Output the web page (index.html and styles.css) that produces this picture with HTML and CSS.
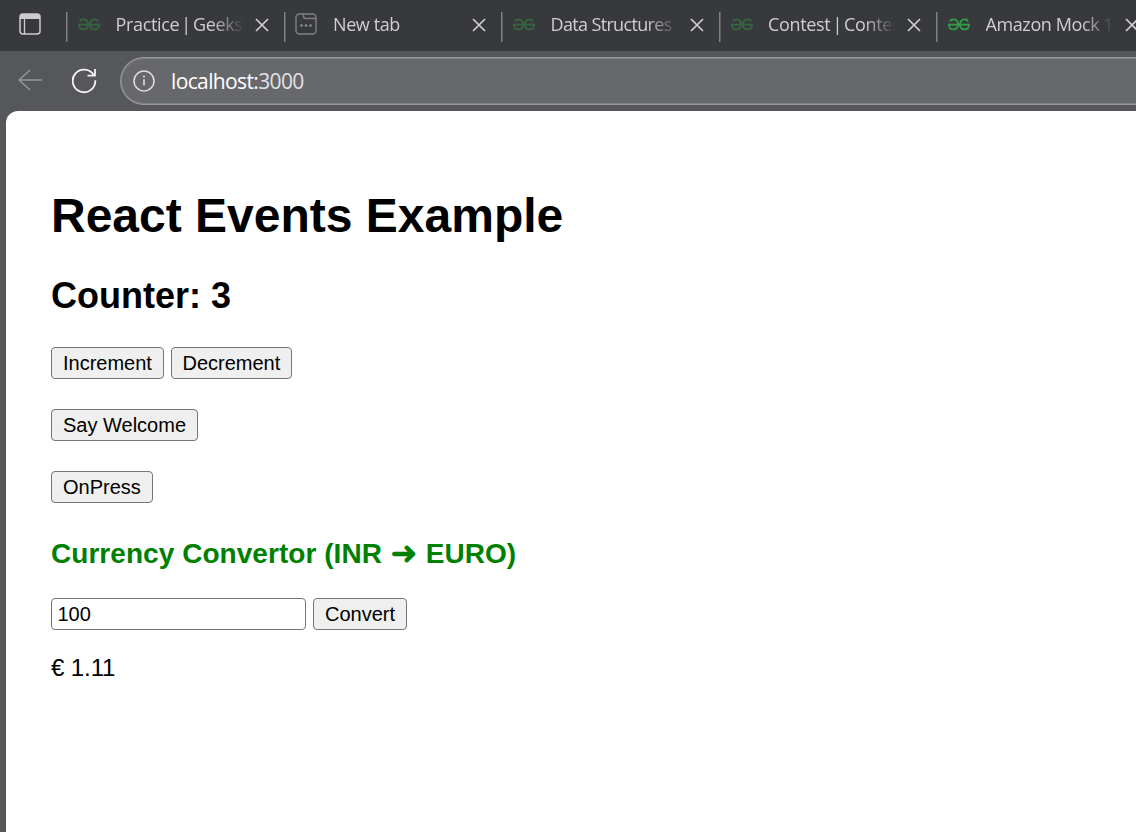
FILE: index.html
```html
<!DOCTYPE html>
<html lang="en">
<head>
<meta charset="utf-8">
<title>React Events Example</title>
<link rel="stylesheet" href="styles.css">
</head>
<body>
<svg class="defs" aria-hidden="true">
  <symbol id="gfg" viewBox="0 0 22 14">
    <g fill="none" stroke="currentColor" stroke-width="1.8">
      <path d="M0 6.6H22"/>
      <path d="M1.8 3.4C2.6 1.9 3.9 1.4 5.4 1.4C8.2 1.4 10 3.4 10 6.4C10 9.4 8.2 11.3 5.4 11.3C2.8 11.3 1 9.6 1 6.9"/>
      <path d="M20.2 3.4C19.4 1.9 18.1 1.4 16.6 1.4C13.8 1.4 12 3.4 12 6.4C12 9.4 13.8 11.3 16.6 11.3C19.2 11.3 21 9.6 21 6.9"/>
    </g>
  </symbol>
  <symbol id="close" viewBox="0 0 14 14"><path d="M1 1L13 13M13 1L1 13" fill="none" stroke="currentColor" stroke-width="1.7"/></symbol>
</svg>
<header class="tabs">
  <div class="workspace">
    <svg width="22" height="22" viewBox="0 0 22 22"><rect x="1" y="1" width="20" height="20" rx="3" fill="none" stroke="#ccc" stroke-width="1.5"/><path d="M1 6V4Q1 1 4 1H18Q21 1 21 4V6Z" fill="#ccc"/><path d="M5.5 6V21" stroke="#ccc" stroke-width="1.3"/></svg>
  </div>
  <div class="tab"><svg class="logo"><use href="#gfg"/></svg><span class="label piped">Practice | Geeksf</span><svg class="close"><use href="#close"/></svg></div>
  <div class="tab"><svg class="blank" viewBox="0 0 22 22"><g fill="none" stroke="#808184" stroke-width="1.4"><rect x="1" y="1" width="20" height="20" rx="3.5"/><path d="M8.5 1V3Q8.5 5.5 11 5.5H21"/></g><g fill="#909194"><circle cx="6.5" cy="12.5" r="1.3"/><circle cx="11" cy="12.5" r="1.3"/><circle cx="15.5" cy="12.5" r="1.3"/></g></svg><span class="label">New tab</span><svg class="close"><use href="#close"/></svg></div>
  <div class="tab"><svg class="logo"><use href="#gfg"/></svg><span class="label long">Data Structures</span><svg class="close"><use href="#close"/></svg></div>
  <div class="tab"><svg class="logo"><use href="#gfg"/></svg><span class="label piped">Contest | Contes</span><svg class="close"><use href="#close"/></svg></div>
  <div class="tab"><svg class="logo bright"><use href="#gfg"/></svg><span class="label">Amazon Mock 1</span><svg class="close"><use href="#close"/></svg></div>
</header>
<nav class="toolbar">
  <svg class="back" viewBox="0 0 24 22"><path d="M24 11H1M12 1L1 11L12 21" fill="none" stroke="#98999b" stroke-width="1.4"/></svg>
  <svg class="reload" viewBox="0 0 26 26"><path d="M22 7.6A11.3 11.3 0 1 0 23.3 12.2M23 1V7.6H15.5" fill="none" stroke="#f4f4f4" stroke-width="1.8"/></svg>
  <div class="address">
    <svg class="info" viewBox="0 0 22 22"><circle cx="11" cy="11" r="10" fill="none" stroke="#dededf" stroke-width="1.5"/><path d="M11 9.2V15.5" stroke="#dededf" stroke-width="1.6"/><circle cx="11" cy="6.5" r="1.1" fill="#dededf"/></svg>
    <span class="url"><b>localhost:</b>3000</span>
  </div>
</nav>
<main class="page">
  <h1>React Events Example</h1>
  <h2>Counter: 3</h2>
  <div class="row"><button>Increment</button><button class="dec">Decrement</button></div>
  <div class="row"><button>Say Welcome</button></div>
  <div class="row"><button>OnPress</button></div>
  <h3>Currency Convertor (INR <span class="arrow">➜</span> EURO)</h3>
  <div class="row"><input type="text" value="100"><button>Convert</button></div>
  <p>€ 1.11</p>
</main>
</body>
</html>
```
FILE: styles.css
```css
* { box-sizing: border-box; }
body {
  margin: 0;
  width: 1136px;
  height: 832px;
  overflow: hidden;
  display: flex;
  flex-direction: column;
  background: #56575b;
  font-family: "Liberation Sans", Arial, sans-serif;
  color: #000;
}
.defs { display: none; }
.tabs {
  flex: none;
  display: flex;
  height: 51px;
  overflow: hidden;
  background: #38393c;
  font-family: "Open Sans", "Noto Sans", sans-serif;
  color: #cfcfcf;
}
.workspace { flex: none; width: 66px; padding: 13px 0 0 19px; }
.workspace svg { display: block; }
.tab {
  flex: none;
  display: flex;
  align-items: center;
  width: 217.5px;
  height: 48px;
  padding-left: 10px;
  background: linear-gradient(#808184, #808184) 0 12px / 1.5px 30px no-repeat;
}
.logo { flex: none; width: 22px; height: 14px; margin: 2px 5px 0 2px; color: #35663f; }
.logo.bright { color: #2f9e47; }
.blank { flex: none; width: 22px; height: 22px; margin: 0 6px 0 1px; }
.label {
  flex: none;
  width: 128px;
  margin: -1px 0 0 10.5px;
  white-space: nowrap;
  font-size: 18px;
  line-height: 26px;
  letter-spacing: -0.4px;
  -webkit-mask-image: linear-gradient(90deg, #000 96px, transparent 128px);
  mask-image: linear-gradient(90deg, #000 96px, transparent 128px);
}
.label.piped { letter-spacing: -0.35px; word-spacing: -2.2px; }
.label.long { letter-spacing: -0.65px; }
.close { flex: none; width: 14px; height: 14px; margin: 1px 0 0 11px; }
.toolbar { flex: none; display: flex; height: 60px; padding: 6px 0 0 18px; }
.back { flex: none; width: 24px; height: 22px; margin: 12px 30px 0 0; }
.reload { flex: none; width: 26px; height: 26px; margin: 11px 22px 0 0; }
.address {
  flex: 1;
  display: flex;
  align-items: center;
  height: 48px;
  padding-left: 12px;
  border: 1px solid #98999c;
  border-right: 0;
  border-radius: 24px 0 0 24px;
  background: #67686c;
  box-shadow: inset 0 1px #808184, inset 0 -1px #808184, inset 1px 0 #808184;
}
.info { flex: none; width: 22px; height: 22px; margin-right: 16px; }
.url { font: 21px/30px "Open Sans", "Noto Sans", sans-serif; letter-spacing: -0.63px; color: #e2e2e3; }
.url b { font-weight: 400; color: #fff; }
.page {
  flex: 1;
  margin-left: 6px;
  padding: 77px 0 0 45px;
  border-radius: 12px 0 0 0;
  background: #fff;
}
h1 { margin: 0 0 31px; font-size: 48px; line-height: 56px; }
h2 { margin: 0 0 30px; font-size: 36px; line-height: 42px; }
h3 { margin: 35px 0 28px; font-size: 28px; line-height: 32px; letter-spacing: 0.05px; white-space: nowrap; color: green; }
p { margin: 24px 0 0; font-size: 24px; line-height: 28px; letter-spacing: -0.1px; }
.row { display: flex; gap: 7px; }
.row + .row { margin-top: 30px; }
button, input {
  height: 32px;
  margin: 0;
  border: 1px solid #767676;
  border-radius: 4px;
  font: 20px/28px "Liberation Sans", Arial, sans-serif;
  color: #000;
}
button { padding: 1px 11px; background: #efefef; }
.dec { padding: 1px 10.5px; }
input { width: 255px; padding: 1px 5.5px; background: #fff; }
.arrow { display: inline-block; width: 28px; height: 32px; text-align: center; vertical-align: top; font: 700 32px/30px "DejaVu Sans", sans-serif; -webkit-text-stroke: 0.6px green; }
```
